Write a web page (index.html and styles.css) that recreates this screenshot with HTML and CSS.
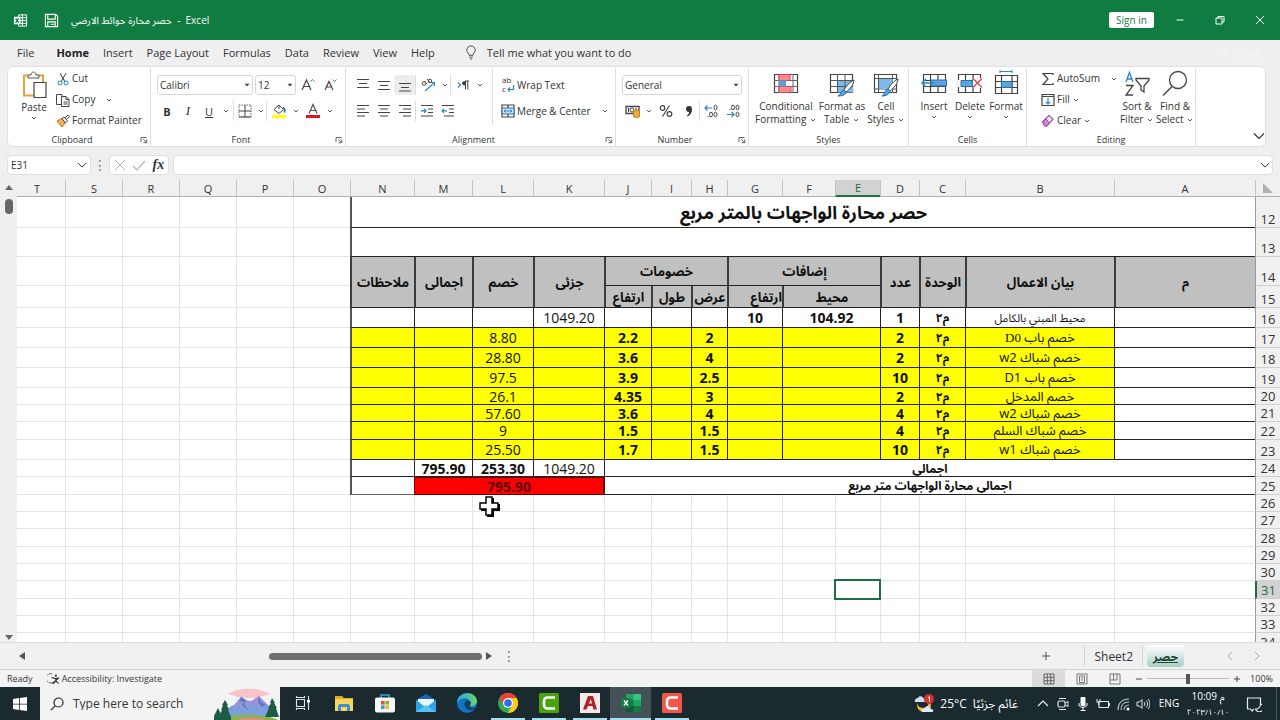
FILE: index.html
```html
<!DOCTYPE html>
<html lang="en">
<head>
<meta charset="utf-8">
<title>حصر محارة حوائط الارضي - Excel</title>
<link rel="stylesheet" href="styles.css">
</head>
<body>
<svg class="defs" aria-hidden="true">
  <symbol id="chev" viewBox="0 0 8 8"><path d="M2 3l2 2 2-2" fill="none" stroke="#555" stroke-width="1"/></symbol>
  <symbol id="chev-big" viewBox="0 0 12 12"><path d="M1 3.500l5 5 5-5" fill="none" stroke="#333" stroke-width="1.200"/></symbol>
  <symbol id="tri" viewBox="0 0 8 8"><path d="M1.500 2.800h5L4 5.600z" fill="#444"/></symbol>
  <symbol id="launch" viewBox="0 0 8 8"><path d="M1 6V1.500h5.500M3.200 3.200L6.500 6.500M6.700 3.500v3.200H3.500" fill="none" stroke="#555" stroke-width=".9"/></symbol>
</svg>

<header class="title">
  <svg class="t-icon" viewBox="0 0 16 16"><path d="M6 2h8.500v12H6zM10 2v12M6 5h8.500M6 8h8.500M6 11h8.500" fill="none" stroke="#fff"/><path d="M1 4h7v8H1z" fill="#fff"/><path d="M2.800 5.800l3.200 4.400M6 5.800l-3.200 4.400" stroke="#107c41" stroke-width="1.300"/></svg>
  <svg class="t-icon" viewBox="0 0 16 16"><path d="M1.500 1.500h11l2 2v11h-13zM4 1.500v5h8v-5M4 14.500V9.500h8v5M7 12h4" fill="none" stroke="#fff" stroke-width="1.200"/></svg>
  <span class="doc"><bdi>حصر محارة حوائط الارضي</bdi>&nbsp; - &nbsp;Excel</span>
  <button class="signin">Sign in</button>
  <button class="win" aria-label="Minimize"><svg viewBox="0 0 12 12"><path d="M2.500 6h7" stroke="#fff"/></svg></button>
  <button class="win" aria-label="Restore"><svg viewBox="0 0 12 12"><path d="M2 4h6v6H2zM4 4V2.500h6V8H8" fill="none" stroke="#fff"/></svg></button>
  <button class="win" aria-label="Close"><svg viewBox="0 0 12 12"><path d="M2 2l8 8M10 2l-8 8" stroke="#fff"/></svg></button>
</header>

<nav class="tabs">
  <button>File</button><button class="on">Home</button><button>Insert</button><button>Page Layout</button><button>Formulas</button><button>Data</button><button>Review</button><button>View</button><button>Help</button>
  <button class="tell"><svg viewBox="0 0 12 16"><path d="M4 11C4 9 1.500 8 1.500 5.500a4.500 4.500 0 0 1 9 0C10.500 8 8 9 8 11zM4 13h4M5 15h2" fill="none" stroke="#444"/></svg>Tell me what you want to do</button>
  <button class="share">⇪ Share</button>
</nav>

<section class="ribbon">
  <div class="group g-clip">
    <div class="body">
      <button class="big paste"><svg viewBox="0 0 26 28"><path d="M3 4.500h19v20H3z" fill="#fff" stroke="#e9a13b" stroke-width="2"/><path d="M7 7V4h3c0-4 5-4 5 0h3v3z" fill="#fff" stroke="#555"/><path d="M13 11.500h12v15H13z" fill="#fff" stroke="#444" stroke-width="1.200"/></svg><span>Paste</span><svg class="c"><use href="#chev"/></svg></button>
      <div class="stack">
        <button><svg class="i" viewBox="0 0 14 14"><path d="M4 1l5 9M10 1L5 10" fill="none" stroke="#444"/><circle cx="4" cy="11" r="2" fill="none" stroke="#2a86c8"/><circle cx="10" cy="11" r="2" fill="none" stroke="#2a86c8"/></svg>Cut</button>
        <button><svg class="i" viewBox="0 0 14 14"><path d="M5 11.500H.500V1.500H6v2M5.500 3.500H10l3 3v7H5.500zM10 3.500v3h3M7.500 9h4M7.500 11h4" fill="none" stroke="#444"/></svg>Copy<svg class="c far"><use href="#chev"/></svg></button>
        <button><svg class="i" viewBox="0 0 14 14"><path d="M1 7l5-2.500 3.500 4.500L6 13z" fill="#f0b15a" stroke="#c66b1c"/><path d="M6 4.500L8 3l3.500 4-2 2zM9 4l3-3 1.500 1.500-3 3.200" fill="#fff" stroke="#444"/></svg>Format Painter</button>
      </div>
    </div>
    <footer class="has-l"><span>Clipboard</span><svg class="l"><use href="#launch"/></svg></footer>
  </div>

  <div class="group g-font">
    <div class="body rows">
      <div class="row r1">
        <span class="combo fname"><select aria-label="Font"><option>Calibri</option></select><svg><use href="#tri"/></svg></span>
        <span class="combo fsize"><select aria-label="Font size"><option>12</option></select><svg><use href="#tri"/></svg></span>
        <button class="w22" aria-label="Increase font size"><svg class="s16" viewBox="0 0 16 16"><path d="M2 13L6.500 3 11 13M3.500 9.500h6" fill="none" stroke="#444" stroke-width="1.200"/><path d="M10.500 4.500L12.500 2.500l2 2" fill="none" stroke="#2a86c8"/></svg></button>
        <button class="w22" aria-label="Decrease font size"><svg class="s16" viewBox="0 0 16 16"><path d="M3 13L7 4.500 11 13M4.500 10h5" fill="none" stroke="#444" stroke-width="1.200"/><path d="M10.500 2.500l2 2 2-2" fill="none" stroke="#2a86c8"/></svg></button>
      </div>
      <div class="row">
        <button class="w20 bold">B</button><button class="w22 ital">I</button><button class="w20 und">U</button><button class="w14" aria-label="Underline styles"><svg class="c"><use href="#chev"/></svg></button><i class="sep"></i>
        <button class="w22" aria-label="Borders"><svg class="s14" viewBox="0 0 14 14"><path d="M1 1h12v12H1z" fill="none" stroke="#666" stroke-dasharray="1.500 1"/><path d="M1 7h12M7 1v12M1 13h12" stroke="#444"/></svg></button><button class="w10" aria-label="Border styles"><svg class="c"><use href="#chev"/></svg></button><i class="sep"></i>
        <button class="w24" aria-label="Fill color"><svg class="s16" viewBox="0 0 16 16"><path d="M3 6.500L8 2l4.500 4.500L8 10.500zM8 2V6" fill="#fff" stroke="#444"/><path d="M12 4.500c2 1 2 3 1.500 5" fill="none" stroke="#2268b0" stroke-width="1.600"/><path d="M1 12h14v3H1z" fill="#ff0"/></svg></button><button class="w10" aria-label="Fill colors"><svg class="c"><use href="#chev"/></svg></button>
        <button class="w24" aria-label="Font color"><svg class="s16" viewBox="0 0 16 16"><path d="M4 10.500L8 1.500l4 9M5.500 7.500h5" fill="none" stroke="#555" stroke-width="1.200"/><path d="M1 12h14v3H1z" fill="#e0141c"/></svg></button><button class="w10" aria-label="Font colors"><svg class="c"><use href="#chev"/></svg></button>
      </div>
    </div>
    <footer class="has-l"><span>Font</span><svg class="l"><use href="#launch"/></svg></footer>
  </div>

  <div class="group g-align">
    <div class="body">
      <div class="rows al">
        <div class="row">
          <button class="w21" aria-label="Top align"><svg class="s14" viewBox="0 0 14 14"><path d="M1 1.500h12M3 5.500h8M1 9.500h12" stroke="#444"/></svg></button><button class="w21" aria-label="Middle align"><svg class="s14" viewBox="0 0 14 14"><path d="M1 3.500h12M3 7.500h8M1 11.500h12" stroke="#444"/></svg></button><button class="w21 on" aria-label="Bottom align"><svg class="s14" viewBox="0 0 14 14"><path d="M1 5.500h12M3 9.500h8M1 13h12" stroke="#444"/></svg></button><i class="sep"></i>
          <button class="w24" aria-label="Orientation"><svg class="s14" viewBox="0 0 14 14"><circle cx="3" cy="5.500" r="1.800" fill="none" stroke="#444"/><path d="M3.500 3l2.500 3M6 1l3.500 4" stroke="#444"/><circle cx="9" cy="3" r="1.700" fill="none" stroke="#444"/><path d="M4 13l9-8M9.500 4.500H13.500V8" fill="none" stroke="#2a86c8" stroke-width="1.200"/></svg></button><button class="w10" aria-label="Orientation options"><svg class="c"><use href="#chev"/></svg></button><i class="sep"></i>
          <button class="w24" aria-label="Text direction"><svg class="s14" viewBox="0 0 14 14"><path d="M2 4.500L4.500 7 2 9.500" fill="none" stroke="#2a86c8" stroke-width="1.200"/><path d="M9 3c-4 0-4 4.500 0 4.500z" fill="#444"/><path d="M9 3h4M9.500 3v8.500M11.800 3v8.500" stroke="#444"/></svg></button><button class="w10" aria-label="Direction options"><svg class="c"><use href="#chev"/></svg></button>
        </div>
        <div class="row">
          <button class="w21" aria-label="Align left"><svg class="s14" viewBox="0 0 14 14"><path d="M1 1.500h12M1 5h8M1 8.500h12M1 12h8" stroke="#444"/></svg></button><button class="w21" aria-label="Center"><svg class="s14" viewBox="0 0 14 14"><path d="M1 1.500h12M3 5h8M1 8.500h12M3 12h8" stroke="#444"/></svg></button><button class="w21" aria-label="Align right"><svg class="s14" viewBox="0 0 14 14"><path d="M1 1.500h12M5 5h8M1 8.500h12M5 12h8" stroke="#444"/></svg></button><i class="sep"></i>
          <button class="w21" aria-label="Increase indent"><svg class="s14" viewBox="0 0 14 14"><path d="M1 1.500h12M8 5h5M8 8.500h5M1 12h12" stroke="#444"/><path d="M1 6.800h5M4 4.800l2 2-2 2" fill="none" stroke="#2a86c8" stroke-width="1.200"/></svg></button><button class="w21" aria-label="Decrease indent"><svg class="s14" viewBox="0 0 14 14"><path d="M1 1.500h12M8 5h5M8 8.500h5M3 12h10" stroke="#444"/><path d="M1 6.800h5M3 4.800l-2 2 2 2" fill="none" stroke="#2a86c8" stroke-width="1.200"/></svg></button>
        </div>
      </div>
      <div class="rows wrap">
        <button><svg class="s14 wt" viewBox="0 0 14 18"><text x="1" y="7" font-size="8" fill="#333">ab</text><text x="1" y="16" font-size="8" fill="#333">c</text><path d="M12.500 9v4.500H7M9 11.500l-2 2 2 2" fill="none" stroke="#2a86c8" stroke-width="1.200"/></svg>Wrap Text</button>
        <button><svg class="s14" viewBox="0 0 14 14"><path d="M1 1h12v12H1zM7 1v3M7 10v3" fill="none" stroke="#444" stroke-width="1.200"/><path d="M1 4h12v6H1z" fill="#cfe6f7" stroke="#2a6ea8"/><path d="M3 7h8M4.500 5.500L3 7l1.500 1.500M9.500 5.500L11 7 9.500 8.500" fill="none" stroke="#2a86c8"/></svg>Merge &amp; Center<svg class="c far"><use href="#chev"/></svg></button>
      </div>
    </div>
    <footer class="has-l"><span>Alignment</span><svg class="l"><use href="#launch"/></svg></footer>
  </div>

  <div class="group g-num">
    <div class="body rows">
      <div class="row"><span class="combo wide"><select aria-label="Number format"><option>General</option></select><svg><use href="#tri"/></svg></span></div>
      <div class="row">
        <button class="w22" aria-label="Accounting format"><svg class="s16" viewBox="0 0 16 16"><path d="M1 3.500h13v7H1z" fill="#fff" stroke="#444" stroke-width="1.300"/><circle cx="7" cy="7" r="2" fill="none" stroke="#444"/><path d="M3.500 5v4M11 5v2" stroke="#444"/><path d="M8.500 8.500c0-2 6-2 6 0v5c0 1.500-6 1.500-6 0z" fill="#f2a93c" stroke="#c97a1a"/></svg></button><button class="w10" aria-label="Currencies"><svg class="c"><use href="#chev"/></svg></button>
        <button class="w24 pct" aria-label="Percent"><svg class="s14" viewBox="0 0 14 14"><g fill="none" stroke="#444" stroke-width="1.200"><circle cx="3.500" cy="4" r="2.300"/><circle cx="10.500" cy="10" r="2.300"/><path d="M10.500 1.500l-7 11"/></g></svg></button>
        <button class="w21" aria-label="Comma style"><svg class="s14" viewBox="0 0 14 14"><path d="M4 5a3 3 0 1 1 6 0c0 4-2 6.500-4.500 7.500L5 11.500c1.500-1 2-2 2.200-3.500C5 8 4 7 4 5z" fill="#333"/></svg></button><i class="sep"></i>
        <button class="w22" aria-label="Increase decimal"><svg class="s14" viewBox="0 0 14 14"><g fill="none" stroke="#444"><ellipse cx="11.500" cy="3.500" rx="1.500" ry="2.300"/><ellipse cx="7" cy="10.500" rx="1.500" ry="2.300"/><ellipse cx="11.500" cy="10.500" rx="1.500" ry="2.300"/></g><path d="M1 4h7M3.500 1.500L1 4l2.500 2.500" fill="none" stroke="#2a86c8" stroke-width="1.200"/><path d="M3.500 12.500h1" stroke="#444"/></svg></button>
        <button class="w22" aria-label="Decrease decimal"><svg class="s14" viewBox="0 0 14 14"><g fill="none" stroke="#444"><ellipse cx="7" cy="3.500" rx="1.500" ry="2.300"/><ellipse cx="11.500" cy="3.500" rx="1.500" ry="2.300"/><ellipse cx="11.500" cy="10.500" rx="1.500" ry="2.300"/></g><path d="M1 10.500h7M5.500 8L8 10.500 5.500 13" fill="none" stroke="#2a86c8" stroke-width="1.200"/><path d="M3.500 5.500h1" stroke="#444"/></svg></button>
      </div>
    </div>
    <footer class="has-l"><span>Number</span><svg class="l"><use href="#launch"/></svg></footer>
  </div>

  <div class="group g-styles">
    <div class="body">
      <button class="big b62"><svg viewBox="0 0 26 28"><path d="M1.500 4.500h23v18h-23z" fill="#fff" stroke="#444" stroke-width="1.200"/><path d="M1 10.500h24M1 16.500h24M6 4v19M20 4v19" stroke="#666"/><path d="M6 4.500h11v6H6zM6 16.500h12v6H6z" fill="#f98a8e" stroke="#d8484e"/><path d="M6 10.500h7v6H6z" fill="#5a9fd8"/></svg><span>Conditional<br>Formatting <svg class="c"><use href="#chev"/></svg></span></button>
      <button class="big b50"><svg viewBox="0 0 26 28"><path d="M1.500 4.500h22v18h-22z" fill="#fff" stroke="#444" stroke-width="1.200"/><path d="M9 10.500h15v12H9z" fill="#7db9ea"/><path d="M1 10.500h23M1 16.500h23M8.500 4v19M16 4v19" stroke="#555"/><path d="M25 10c-4 2-8 6-10 10l2 2c4-3 8-8 8-12z" fill="#fff" stroke="#444"/><path d="M15 20l2 2c0 3-4 4-8 4 3-1 2-5 6-6z" fill="#5aa5e0" stroke="#226ba8"/></svg><span>Format as<br>Table <svg class="c"><use href="#chev"/></svg></span></button>
      <button class="big b38"><svg viewBox="0 0 26 28"><path d="M1.500 4.500h22v18h-22z" fill="#fff" stroke="#444" stroke-width="1.200"/><path d="M1 8.500h23M1 19h23M5.500 4v19M19.500 4v19" stroke="#555"/><path d="M6 9h13.500v10H6z" fill="#7db9ea"/><path d="M25 9c-4 2-8 6-10 10l2 2c4-3 8-8 8-12z" fill="#fff" stroke="#444"/><path d="M15 19l2 2c0 3-4 5-8 5 3-1 2-6 6-7z" fill="#5aa5e0" stroke="#226ba8"/></svg><span>Cell<br>Styles <svg class="c"><use href="#chev"/></svg></span></button>
    </div>
    <footer><span>Styles</span></footer>
  </div>

  <div class="group g-cells">
    <div class="body">
      <button class="big b36"><svg viewBox="0 0 26 28"><path d="M2.500 4.500h22v18h-22zM2 10.500h23M2 16.500h23M9.500 4v19M17 4v19" fill="#fff" stroke="#444" stroke-width="1.200"/><path d="M10 10h15.500v6H10z" fill="#5aa5e0" stroke="#2a6ea8"/><path d="M1 13h12M5 9l-4 4 4 4" fill="none" stroke="#2a86c8" stroke-width="1.500"/></svg><span>Insert</span><svg class="c"><use href="#chev"/></svg></button>
      <button class="big b36"><svg viewBox="0 0 26 28"><path d="M1.500 4.500h22v18h-22zM1 10.500h23M1 16.500h23M8.500 4v19M16 4v19" fill="#fff" stroke="#444" stroke-width="1.200"/><path d="M1 10h4v7H1z" fill="#fff"/><path d="M4 10.500h11v6H4z" fill="#5aa5e0" stroke="#2a6ea8"/><path d="M16 8h9v10h-9z" fill="#fff"/><path d="M16 8.500l9 9M25 8.500l-9 9" stroke="#e2474d" stroke-width="1.400"/></svg><span>Delete</span><svg class="c"><use href="#chev"/></svg></button>
      <button class="big b36"><svg viewBox="0 0 26 28"><path d="M2.500 5.500h22v18h-22zM2 11.500h23M2 17.500h23M8.500 5v19M19 5v19" fill="#fff" stroke="#444" stroke-width="1.200"/><path d="M8.500 11.500H19v6H8.500z" fill="#5aa5e0" stroke="#2a6ea8"/><path d="M7 1.500h12M7 0v3M19 0v3" stroke="#2a86c8"/></svg><span>Format</span><svg class="c"><use href="#chev"/></svg></button>
    </div>
    <footer><span>Cells</span></footer>
  </div>

  <div class="group g-edit">
    <div class="body">
      <div class="stack">
        <button><svg class="i" viewBox="0 0 14 14"><path d="M12 3V1.500H2l5 5.500-5 5.500h10V11" fill="none" stroke="#444" stroke-width="1.200"/></svg>AutoSum<svg class="c far"><use href="#chev"/></svg></button>
        <button><svg class="i" viewBox="0 0 14 14"><path d="M1 1.500h12v11H1zM1 3.500h12" fill="none" stroke="#444" stroke-width="1.200"/><path d="M7 5v6M4.800 8.800L7 11l2.200-2.200" fill="none" stroke="#2a86c8" stroke-width="1.200"/></svg>Fill<svg class="c"><use href="#chev"/></svg></button>
        <button><svg class="i" viewBox="0 0 14 14"><path d="M1.500 8L8 1.500 12 5l-6 7H4z" fill="#fff" stroke="#a045b0" stroke-width="1.200"/><path d="M1.500 8L5 5l3.500 4L6 12H4z" fill="#cf8ad8" stroke="#a045b0"/></svg>Clear<svg class="c"><use href="#chev"/></svg></button>
      </div>
      <button class="big b38 sort"><svg viewBox="0 0 26 28"><path d="M2 12L5.500 2.500 9 12M3.500 9h4.500" fill="none" stroke="#2a86c8" stroke-width="1.300"/><path d="M2 15.500h7L2 25h7" fill="none" stroke="#444" stroke-width="1.300"/><path d="M12 8.500h13v1.500l-5 6v6l-3-2v-4l-5-6z" fill="#fff" stroke="#444" stroke-width="1.300"/></svg><span>Sort &amp;<br>Filter <svg class="c"><use href="#chev"/></svg></span></button>
      <button class="big b38"><svg viewBox="0 0 26 28"><circle cx="16" cy="10" r="8.500" fill="#fff" stroke="#444" stroke-width="1.300"/><path d="M10 16.500L1 25.500" stroke="#444" stroke-width="1.500"/></svg><span>Find &amp;<br>Select <svg class="c"><use href="#chev"/></svg></span></button>
    </div>
    <footer><span>Editing</span></footer>
  </div>
  <button class="collapse" aria-label="Collapse ribbon"><svg viewBox="0 0 12 12"><use href="#chev-big"/></svg></button>
</section>

<section class="fbar">
  <label class="namebox"><input value="E31" aria-label="Name box"><svg viewBox="0 0 12 12"><use href="#chev-big"/></svg></label>
  <span class="dots">⋮</span>
  <div class="fx"><button aria-label="Cancel"><svg viewBox="0 0 14 14"><path d="M2 2l10 10M12 2L2 12" stroke="#b5b5b5"/></svg></button><button aria-label="Enter"><svg viewBox="0 0 14 14"><path d="M1 8l4 4 8-9" fill="none" stroke="#b5b5b5" stroke-width="1.200"/></svg></button><button class="fn">fx</button></div>
  <label class="formula"><input aria-label="Formula bar"><svg viewBox="0 0 12 12"><use href="#chev-big"/></svg></label>
</section>

<main class="sheet">
  <div class="vscroll"><svg viewBox="0 0 8 6"><path d="M0 5h8L4 0z" fill="#666"/></svg><i></i><svg class="dn" viewBox="0 0 8 6"><path d="M0 1h8L4 6z" fill="#666"/></svg></div>
  <div class="grid" dir="rtl">
  <table>
    <colgroup><col class="cr"><col class="ca"><col class="cb"><col class="cc"><col class="cd"><col class="ce"><col class="cf"><col class="cg"><col class="ch"><col class="ci"><col class="cj"><col class="ck"><col class="cl"><col class="cm"><col class="cn"><col span="6" class="co"></colgroup>
    <thead><tr><th class="corner"><svg viewBox="0 0 10 10"><path d="M0 0v10h10z" fill="#b0b0b0"/></svg></th><th>A<th>B<th>C<th>D<th class="cur">E<th>F<th>G<th>H<th>I<th>J<th>K<th>L<th>M<th>N<th>O<th>P<th>Q<th>R<th>S<th>T</tr></thead>
    <tbody>
    <tr class="h31 k"><th>12</th><td colspan="14" class="heading edge">حصر محارة الواجهات بالمتر مربع</td><td><td><td><td><td><td></tr>
    <tr class="h29 k"><th>13</th><td colspan="14" class="edge"></td><td><td><td><td><td><td></tr>
    <tr class="h29 k hd"><th>14</th><td rowspan="2">م</td><td rowspan="2">بيان الاعمال</td><td rowspan="2">الوحدة</td><td rowspan="2">عدد</td><td colspan="3">إضافات</td><td colspan="3">خصومات</td><td rowspan="2">جزئى</td><td rowspan="2">خصم</td><td rowspan="2">اجمالى</td><td rowspan="2" class="edge">ملاحظات</td><td><td><td><td><td><td></tr>
    <tr class="h22 k hd"><th>15</th><td colspan="2">محيط</td><td class="start">ارتفاع</td><td>عرض</td><td>طول</td><td>ارتفاع</td><td><td><td><td><td><td></tr>
    <tr class="h20 k d"><th>16</th><td></td><td class="small">محيط المبني بالكامل</td><td class="u">م٢</td><td>1</td><td colspan="2">104.92</td><td>10</td><td><td><td><td class="n">1049.20</td><td><td><td class="edge"></td><td><td><td><td><td><td></tr>
    <tr class="h20 k d y"><th>17</th><td></td><td class="item serif">خصم باب D0</td><td class="u">م٢</td><td>2</td><td colspan="2"></td><td></td><td>2</td><td></td><td>2.2</td><td></td><td class="n">8.80</td><td></td><td class="edge"></td><td><td><td><td><td><td></tr>
    <tr class="h20 k d y"><th>18</th><td></td><td class="item">خصم شباك w2</td><td class="u">م٢</td><td>2</td><td colspan="2"></td><td></td><td>4</td><td></td><td>3.6</td><td></td><td class="n">28.80</td><td></td><td class="edge"></td><td><td><td><td><td><td></tr>
    <tr class="h20 k d y"><th>19</th><td></td><td class="item">خصم باب D1</td><td class="u">م٢</td><td>10</td><td colspan="2"></td><td></td><td>2.5</td><td></td><td>3.9</td><td></td><td class="n">97.5</td><td></td><td class="edge"></td><td><td><td><td><td><td></tr>
    <tr class="h17 k d y"><th>20</th><td></td><td class="item">خصم المدخل</td><td class="u">م٢</td><td>2</td><td colspan="2"></td><td></td><td>3</td><td></td><td>4.35</td><td></td><td class="n">26.1</td><td></td><td class="edge"></td><td><td><td><td><td><td></tr>
    <tr class="h17 k d y"><th>21</th><td></td><td class="item">خصم شباك w2</td><td class="u">م٢</td><td>4</td><td colspan="2"></td><td></td><td>4</td><td></td><td>3.6</td><td></td><td class="n">57.60</td><td></td><td class="edge"></td><td><td><td><td><td><td></tr>
    <tr class="h18 k d y"><th>22</th><td></td><td class="item">خصم شباك السلم</td><td class="u">م٢</td><td>4</td><td colspan="2"></td><td></td><td>1.5</td><td></td><td>1.5</td><td></td><td class="n">9</td><td></td><td class="edge"></td><td><td><td><td><td><td></tr>
    <tr class="h20 k d y"><th>23</th><td></td><td class="item">خصم شباك w1</td><td class="u">م٢</td><td>10</td><td colspan="2"></td><td></td><td>1.5</td><td></td><td>1.7</td><td></td><td class="n">25.50</td><td></td><td class="edge"></td><td><td><td><td><td><td></tr>
    <tr class="h17 k d"><th>24</th><td colspan="10" class="total">اجمالى</td><td class="n">1049.20</td><td>253.30</td><td>795.90</td><td class="edge"></td><td><td><td><td><td><td></tr>
    <tr class="h18 k d"><th>25</th><td colspan="10" class="total">اجمالى محارة الواجهات متر مربع</td><td colspan="3" class="red">795.90</td><td class="edge box"></td><td><td><td><td><td><td></tr>
    <tr class="h17"><th>26</th><td><td><td><td><td><td><td><td><td><td><td><td><td><td><td><td><td><td><td><td></tr>
    <tr class="h17"><th>27</th><td><td><td><td><td><td><td><td><td><td><td><td><td><td><td><td><td><td><td><td></tr>
    <tr class="h18"><th>28</th><td><td><td><td><td><td><td><td><td><td><td><td><td><td><td><td><td><td><td><td></tr>
    <tr class="h17"><th>29</th><td><td><td><td><td><td><td><td><td><td><td><td><td><td><td><td><td><td><td><td></tr>
    <tr class="h17"><th>30</th><td><td><td><td><td><td><td><td><td><td><td><td><td><td><td><td><td><td><td><td></tr>
    <tr class="h18"><th class="cur">31</th><td><td><td><td><td class="sel"><i></i></td><td><td><td><td><td><td><td><td><td><td><td><td><td><td><td></tr>
    <tr class="h17"><th>32</th><td><td><td><td><td><td><td><td><td><td><td><td><td><td><td><td><td><td><td><td></tr>
    <tr class="h17"><th>33</th><td><td><td><td><td><td><td><td><td><td><td><td><td><td><td><td><td><td><td><td></tr>
    <tr class="h18"><th>34</th><td><td><td><td><td><td><td><td><td><td><td><td><td><td><td><td><td><td><td><td></tr>
    </tbody>
  </table>
  </div>
  <svg class="pointer" viewBox="0 0 24 24"><path d="M9 3h7v6h6v7h-6v6H9v-6H3V9h6z" fill="#000"/><path d="M8 2h6v6h6v6h-6v6H8v-6H2V8h6z" fill="#fff" stroke="#000" stroke-width="1.500"/></svg>
</main>

<section class="sheetbar">
  <svg class="arr" viewBox="0 0 6 8"><path d="M6 0v8L0 4z" fill="#555"/></svg>
  <div class="hscroll"><i></i></div>
  <svg class="arr" viewBox="0 0 6 8"><path d="M0 0v8l6-4z" fill="#555"/></svg>
  <span class="dots">⋮</span>
  <button class="add" aria-label="New sheet"><svg viewBox="0 0 10 10"><path d="M1 5h8M5 1v8" stroke="#555"/></svg></button>
  <button class="tab">Sheet2</button>
  <button class="tab cur">حصر</button>
  <div class="nav"><button aria-label="Previous sheet"><svg viewBox="0 0 6 10"><path d="M5 1L1 5l4 4" fill="none" stroke="#aaa"/></svg></button><button aria-label="Next sheet"><svg viewBox="0 0 6 10"><path d="M1 1l4 4-4 4" fill="none" stroke="#aaa"/></svg></button></div>
</section>

<section class="status">
  <span>Ready</span>
  <button class="acc"><svg viewBox="0 0 14 14"><path d="M5 2a5 5 0 1 0 1 9M4 6h3" fill="none" stroke="#555" stroke-dasharray="4 1"/><circle cx="9" cy="4" r="1.200" fill="#444"/><path d="M5.500 6.500l3 .5 4-.5M9 7v2.500l-2.500 3M9 9.500l3 3M5 12.500l7-6" fill="none" stroke="#333" stroke-width="1.200"/></svg>Accessibility: Investigate</button>
  <div class="views">
    <button class="on" aria-label="Normal view"><svg viewBox="0 0 12 12"><path d="M1 1h10v10H1zM1 4.300h10M1 7.700h10M4.300 1v10M7.700 1v10" fill="none" stroke="#666"/></svg></button>
    <button aria-label="Page layout view"><svg viewBox="0 0 12 12"><path d="M1 1h10v10H1zM3.500 3h5v6.500h-5zM5 5h2M5 7h2" fill="none" stroke="#777"/></svg></button>
    <button aria-label="Page break view"><svg viewBox="0 0 12 12"><path d="M1 1h10v10H1zM4.500 1v6H8V1M1 7h4" fill="none" stroke="#777"/></svg></button>
  </div>
  <button class="zb" aria-label="Zoom out"><svg viewBox="0 0 8 8"><path d="M1 4h6" stroke="#444"/></svg></button>
  <input type="range" aria-label="Zoom" min="0" max="100" value="50">
  <button class="zb" aria-label="Zoom in"><svg viewBox="0 0 8 8"><path d="M1 4h6M4 1v6" stroke="#444"/></svg></button>
  <span class="pc">100%</span>
</section>

<footer class="taskbar">
  <button class="start-btn" aria-label="Start"><svg viewBox="0 0 14 14"><path d="M0 2l6-.9v5.600H0zM6.800 1L14 0v6.700H6.800zM0 7.400h6V13l-6-.9zM6.800 7.400H14V14l-7.200-1z" fill="#fff"/></svg></button>
  <label class="search"><svg class="mag" viewBox="0 0 14 14"><circle cx="8.500" cy="5.500" r="4.500" fill="none" stroke="#222" stroke-width="1.200"/><path d="M5.200 8.800L.800 13.200" stroke="#222" stroke-width="1.200"/></svg><input placeholder="Type here to search" aria-label="Type here to search">
    <svg class="hills" viewBox="0 0 66 32"><defs><linearGradient id="mt" x1="0" y1="0" x2="0" y2="1"><stop offset="0" stop-color="#a78bd0"/><stop offset="1" stop-color="#6fa6e2"/></linearGradient></defs><path d="M14 6c10-7 32-7 42 0L42 10H28z" fill="#f8c3cb"/><path d="M10 27c2-5 6-9 10-10l7-8 5 3 5 1 8-5 8 8 9 8v4H10z" fill="url(#mt)"/><path d="M27 9l5 3-2 4 5 7-7-6 2-3-5-1zM45 8l2 6 5 3-4 2-4-5z" fill="#5c78c8"/><path d="M2 32c10-7 50-7 62 0z" fill="#8bb250"/><path d="M11 12l3 5h-1l2 5h-1l3 7v3H5v-3l3-7H7l2-5H8zM4 20l3 6v6H0v-4zM58 10l3 5h-1l3 5h-1l3 9H51l4-9h-1l3-5h-1z" fill="#1f5b44"/><path d="M22 32c8-3 20-3 30 0z" fill="#e38f7d"/></svg></label>
  <div class="apps">
  <button class="app" aria-label="Task view"><svg class="n16" viewBox="0 0 16 16"><path d="M1.500 4.500h8v7h-8zM1.500 1v1.500h8V1M1.500 15v-1.500h8V15M13.500 1v14" fill="none" stroke="#dfe7ea" stroke-width="1.100"/><path d="M12 5h3v2.500h-3z" fill="#fff"/></svg></button>
  <button class="app" aria-label="File Explorer"><svg viewBox="0 0 20 20"><path d="M1 3h7l2 2h9v13H1z" fill="#e8a823"/><path d="M1 6h18v12H1z" fill="#fbd65c"/><path d="M4 18v-5c0-1 1-2 2-2h8c1 0 2 1 2 2v5h-3v-4H7v4z" fill="#3b8ed0"/></svg></button>
  <button class="app" aria-label="Microsoft Store"><svg viewBox="0 0 20 20"><path d="M6 5V2h8v3" fill="none" stroke="#37a6dc" stroke-width="1.500"/><rect y="4.500" width="20" height="15" rx="2" fill="#f4f6f7"/><path d="M6 8h3.600v3.600H6z" fill="#e8502f"/><path d="M10.400 8H14v3.600h-3.600z" fill="#7db928"/><path d="M6 12.400h3.600V16H6z" fill="#2d9fdd"/><path d="M10.400 12.400H14V16h-3.600z" fill="#f7b916"/></svg></button>
  <button class="app" aria-label="Mail"><svg viewBox="0 0 20 20"><path d="M0 7l10-6 10 6v12H0z" fill="#1266b5"/><path d="M2 6h16v8H2z" fill="#eaf6fd"/><path d="M0 7l10 7.500L20 7v12H0z" fill="#2fa3ea"/><path d="M0 19l10-7 10 7z" fill="#55c2f5"/></svg></button>
  <button class="app" aria-label="Edge"><svg viewBox="0 0 20 20"><defs><linearGradient id="ed" x1="0" y1="0" x2="1" y2="0"><stop offset="0" stop-color="#2aa7e0"/><stop offset="1" stop-color="#63d968"/></linearGradient></defs><circle cx="10" cy="10" r="10" fill="#1272c4"/><path d="M0 10C0-2 19-3 20 8c0 4-4 6-7.500 5 1-1 1.500-2 1-4C12 4 3 4 0 10z" fill="url(#ed)"/><path d="M7.500 11c0-3 3-5 6-2 1 1-1 2.500-.5 4.500 1 2 4 2 6 .8C17 18 8 19 7.500 11z" fill="#12405e"/></svg></button>
  <button class="app run" aria-label="Chrome"><svg viewBox="0 0 20 20"><circle cx="10" cy="10" r="10" fill="#34a853"/><path d="M1.300 5A10 10 0 0 1 18.700 5H10l-4.300 7.500z" fill="#ea4335"/><path d="M18.700 5A10 10 0 0 1 9.500 20l4.800-7.500L10 5z" fill="#fbc916"/><circle cx="10" cy="10" r="5" fill="#fff"/><circle cx="10" cy="10" r="3.800" fill="#2f72e8"/></svg></button>
  <button class="app run" aria-label="Camtasia"><svg viewBox="0 0 20 20"><rect width="20" height="20" rx="1.500" fill="#48a30d"/><path d="M16 4.500H8.500a3.500 3.500 0 0 0-3.500 3.500v4a3.500 3.500 0 0 0 3.500 3.500H16" fill="none" stroke="#fff" stroke-width="2.600"/></svg></button>
  <button class="app run" aria-label="AutoCAD"><svg viewBox="0 0 20 20"><path d="M0 0h20v20H0z" fill="#f6eae9"/><path d="M3 16.500L8 3h5l4 13.500h-3.500l-1-3.500H8l-1.500 3.500zM9 10.500h3L10.800 6z" fill="#b0222b" fill-rule="evenodd"/></svg></button>
  <button class="app run act" aria-label="Excel"><svg viewBox="0 0 20 20"><path d="M5 1h15v18H5z" fill="#21a366"/><path d="M12.500 1H20v6h-7.500z" fill="#33c481"/><path d="M5 13h15v6H5zM5 7h7.500v6H5z" fill="#107c41"/><path d="M5 13h7.500v6H5z" fill="#185c37"/><rect y="5" width="10" height="10" rx="1" fill="#107c41"/><path d="M3 7.500l4 5M7 7.500l-4 5" stroke="#fff" stroke-width="1.500"/></svg></button>
  <button class="app run" aria-label="Camtasia Recorder"><svg viewBox="0 0 20 20"><rect width="20" height="20" rx="1.500" fill="#f2564b"/><path d="M16 4.500H8.500a3.500 3.500 0 0 0-3.500 3.500v4a3.500 3.500 0 0 0 3.500 3.500H16" fill="none" stroke="#fff" stroke-width="2.600"/></svg></button>
  </div>

  <div class="tray">
    <button class="weather"><svg viewBox="0 0 20 20"><circle cx="10" cy="11" r="7" fill="#f6b93b"/><circle cx="9" cy="8" r="6" fill="#1b2a2f"/><path d="M1 8c-1-3 2-4 3-4 1-3 5-2 6 1 2 0 2 3 0 3z" fill="#cfe0fb"/><path d="M8 18c-1-3 2-4 3-4 1-3 5-2 6 1 3 0 3 3 1 3z" fill="#dbe8fd"/><circle cx="15" cy="5" r="5" fill="#d8322c"/><path d="M14 4l1.500-1.200V7.500" fill="none" stroke="#fff"/></svg><span>25°C</span><bdi>غائم جزئيًا</bdi></button>
    <button aria-label="Hidden icons"><svg viewBox="0 0 14 14"><path d="M2 9l5-5 5 5" fill="none" stroke="#e6ecee" stroke-width="1.200"/></svg></button>
    <button aria-label="Meet now"><svg viewBox="0 0 14 14"><path d="M3 1.500h7M3 12.500h7" stroke="#dfe6e8"/><rect x="2" y="4" width="7" height="6" rx="1.500" fill="none" stroke="#dfe6e8" stroke-width="1.200"/><path d="M9 6l3-1.500v5L9 8" fill="none" stroke="#dfe6e8"/></svg></button>
    <button aria-label="Microphone"><svg viewBox="0 0 14 14"><rect x="4.500" y="0" width="5" height="9" rx="1" fill="#fff"/><path d="M3 6v2c0 3 8 3 8 0V6M7 10v3M4.500 13.500h5" fill="none" stroke="#fff"/></svg></button>
    <button aria-label="Battery"><svg viewBox="0 0 14 14"><path d="M3 4.500h9.500v6H3zM13.500 6v3M1 2v3h3V2M2.500 5v3" fill="none" stroke="#dfe6e8" stroke-width="1.100"/></svg></button>
    <button aria-label="Wi-Fi"><svg viewBox="0 0 14 14"><g fill="none" stroke="#b9c6ca" stroke-width="1.100"><path d="M2 13C2 6 6 2 13 2M5 13c0-5 3-8 8-8M8 13c0-3 2-5 5-5"/></g><circle cx="12" cy="12" r="1.500" fill="#fff"/></svg></button>
    <button aria-label="Volume"><svg viewBox="0 0 14 14"><path d="M1 5h2.500L6 2.500v9L3.500 9H1zM8 5c1 1 1 3 0 4M10 3.500c2 2 2 5 0 7M12 2c2.500 3 2.500 7 0 10" fill="none" stroke="#dfe6e8"/></svg></button>
    <button class="lang">ENG</button>
    <button class="clock"><span dir="ltr">10:09 <bdi>م</bdi></span><span class="date">٢٠٢٣/١٠/١٠</span></button>
    <button class="note" aria-label="Notifications"><svg viewBox="0 0 16 16"><path d="M8 13l-2 2-1.500-2H1.500V2h13v6" fill="none" stroke="#e6ecee" stroke-width="1.200"/><path d="M14.500 8a4 4 0 1 1-5 5c3 0 5-2 5-5z" fill="none" stroke="#e6ecee" stroke-width="1.100"/></svg></button>
  </div>
</footer>
</body>
</html>
```
FILE: styles.css
```css
* { box-sizing: border-box; }
body {
  margin: 0; height: 100vh; display: flex; flex-direction: column; overflow: hidden;
  background: #efefef; color: #333;
  font: 10px/13px "Open Sans", "Noto Sans Arabic", "DejaVu Sans", sans-serif;
}
button, input, select { font: inherit; color: inherit; border: 0; background: none; padding: 0; margin: 0; outline: 0; }
button { display: flex; align-items: center; justify-content: center; white-space: nowrap; }
svg { display: block; flex: none; }
.defs { position: absolute; width: 0; height: 0; }
.c { width: 8px; height: 8px; display: inline-block; vertical-align: middle; }

/* title bar */
.title { height: 40px; flex: none; display: flex; align-items: center; background: #107c41; color: #fff; padding-left: 13px; }
.t-icon { width: 15px; height: 15px; margin-right: 16px; }
.doc { flex: 1; margin-left: -4px; }
.signin { width: 45px; height: 16px; background: #fff; color: #107c41; border-radius: 2px; margin-right: 6px; }
.win { width: 40px; height: 40px; }
.win svg { width: 12px; height: 12px; }

/* ribbon tabs */
.tabs { height: 26px; flex: none; display: flex; align-items: center; gap: 14px; padding: 0 18px 2px 17px; font-size: 11px; }
.tabs .on { font-weight: 700; color: #222; margin-left: 8px; }
.tell { gap: 10px; margin-left: 16px; }
.tell svg { width: 12px; height: 15px; }
.share { margin-left: auto; color: #f8f8f8; }

/* ribbon */
.ribbon { height: 81px; flex: none; display: flex; background: #fff; border: 1px solid #e0e0e0; border-radius: 6px; margin: 0 14px 0 7px; }
.group { display: flex; flex-direction: column; border-right: 1px solid #dedede; margin: 1px 0 0; }
.body { flex: 1; display: flex; }
.group footer { height: 13px; display: flex; align-items: center; justify-content: center; position: relative; font-size: 9px; line-height: 12px; }
.group .has-l { padding-right: 14px; }
.l { width: 8px; height: 8px; position: absolute; right: 2px; bottom: 2px; }
.g-clip { width: 143px; } .g-font { width: 195px; } .g-align { width: 270px; } .g-num { width: 133px; }
.g-styles { width: 160px; } .g-cells { width: 118px; } .g-edit { width: 169px; }
.rows { display: flex; flex-direction: column; gap: 6px; padding-top: 7px; }
.row { display: flex; align-items: center; height: 20px; }
.sep { width: 1px; height: 20px; background: #dcdcdc; }
.stack { display: flex; flex-direction: column; }
.stack button { height: 21px; gap: 2px; justify-content: flex-start; }
.i, .s14 { width: 14px; height: 14px; }
.wrap .wt { height: 18px; overflow: visible; }
.s16 { width: 16px; height: 16px; }
.w10 { width: 10px; } .w14 { width: 14px; } .w20 { width: 20px; } .w21 { width: 21px; } .w22 { width: 22px; } .w24 { width: 24px; }
.row button { height: 20px; font-size: 11px; }
.row .on { background: #ececec; border-radius: 3px; }
.row .bold { font-weight: 700; } .row .ital { font: italic 13px "Liberation Serif", serif; } .und { text-decoration: underline; }
.big { flex-direction: column; justify-content: flex-start; line-height: 13px; padding-top: 2px; }
.big > svg:first-child { width: 26px; height: 28px; margin: 0 auto 2px; }
.big span { display: block; text-align: center; }
.b62 { width: 62px; } .b50 { width: 50px; } .b38 { width: 38px; } .b36 { width: 36px; }
.paste { width: 28px; margin: 1px 8px 0 12px; }
.far { margin-left: 8px; }
.g-font .body { padding-left: 6px; }
.combo { position: relative; height: 20px; border: 1px solid #d6d6d6; border-radius: 3px; }
.combo select { width: 100%; height: 18px; appearance: none; padding-left: 2px; }
.combo svg { position: absolute; right: 1px; top: 5px; width: 8px; height: 8px; pointer-events: none; }
.fname { width: 96px; margin-right: 2px; } .fsize { width: 41px; margin-right: 1px; }
.wide { width: 120px; }
.al { width: 147px; padding-left: 6px; border-right: 1px solid #dedede; margin-bottom: 8px; }
.wrap { padding-left: 8px; }
.wrap button { height: 20px; gap: 2px; justify-content: flex-start; }
.g-num .body { padding-left: 6px; }
.g-styles .body { padding-left: 6px; }
.g-cells .body { padding-left: 7px; }
.g-edit .body { padding-left: 14px; }
.g-edit .stack { width: 77px; }
.collapse { margin: auto 0 4px auto; width: 12px; }
.collapse svg { width: 12px; height: 12px; }

/* formula bar */
.fbar { height: 20px; flex: none; display: flex; margin: 8px 7px 5px; }
.namebox, .formula, .fx { display: flex; align-items: center; background: #fff; border: 1px solid #e0e0e0; border-radius: 4px; }
.namebox { width: 84px; padding: 0 3px; }
.namebox input { width: 66px; }
.namebox svg, .formula svg { width: 10px; height: 10px; }
.dots { width: 18px; text-align: center; color: #777; font-size: 14px; line-height: 20px; }
.fx { width: 60px; }
.fx button { width: 20px; }
.fx svg { width: 14px; height: 14px; }
.fx .fn { font: italic 700 14px/18px "Liberation Serif", serif; }
.formula { flex: 1; margin-left: 4px; padding: 0 2px; }
.formula input { flex: 1; }

/* worksheet */
.sheet { flex: 1; min-height: 0; display: flex; position: relative; }
.vscroll { width: 17px; display: flex; flex-direction: column; align-items: center; padding: 5px 0; }
.vscroll svg { width: 8px; height: 6px; }
.vscroll i { width: 8px; height: 15px; border-radius: 4px; background: #666; margin-top: 8px; }
.vscroll .dn { margin-top: auto; margin-bottom: -3px; }
.grid { flex: 1; min-width: 0; overflow: hidden; background: #fff; }
table { table-layout: fixed; width: 1271px; border-collapse: separate; border-spacing: 0; }
.cr { width: 25px; } .ca { width: 141px; } .cb { width: 149px; } .cc { width: 46px; } .cd { width: 39px; }
.ce { width: 45px; } .cf { width: 53px; } .cg { width: 55px; } .ch { width: 36px; } .ci { width: 40px; }
.cj { width: 47px; } .ck { width: 71px; } .cl { width: 61px; } .cm { width: 58px; } .cn { width: 64px; } .co { width: 57px; }
td, th { padding: 0; line-height: 16px; text-align: center; vertical-align: middle; white-space: nowrap; overflow: hidden; }
td { border-left: 1px solid #e4e4e4; border-bottom: 1px solid #e4e4e4; color: #111; }
th { font-weight: 400; font-size: 11px; background: #f0f0f0; color: #333; }
thead th { height: 17px; line-height: 15px; border-left: 1px solid #c4c4c4; border-bottom: 1px solid #b0b0b0; }
tbody th { font-size: 13px; vertical-align: bottom; border-left: 1px solid #999; border-bottom: 1px solid #d0d0d0; }
thead .cur { background: #d2d2d2; color: #1e6e42; border-bottom: 2px solid #1e6e42; }
tbody .cur { background: #d2d2d2; color: #1e6e42; border-left: 2px solid #1e6e42; }
.corner svg { width: 10px; height: 10px; margin: 0 auto; }
.h17 { height: 17px; } .h18 { height: 18px; } .h20 { height: 20px; }
.h22 { height: 22px; } .h29 { height: 29px; } .h31 { height: 31px; }
.k td { border-left-color: #222; border-bottom-color: #222; font-weight: 700; font-size: 14px; }
.k .edge { border-left: 2px solid #555; }
.k .edge ~ td { border-left-color: #e4e4e4; border-bottom-color: #e4e4e4; background: #fff; }
.hd td, .hd td.edge { background: #c0c0c0; border-left: 2px solid #3c3c3c; border-bottom-width: 1px; font-size: 13px; }
.hd .edge ~ td, .hd td:nth-last-child(-n+6) { background: #fff; border-left: 1px solid #e4e4e4; border-bottom: 1px solid #e4e4e4; }
.k .heading { font-size: 18px; line-height: 28px; }
.k .start { text-align: right; }
.d td { line-height: 15px; }
.k .n { font-weight: 400; }
.k .item { font-weight: 400; font-size: 13px; }
.k .small { font-weight: 400; font-size: 11px; }
.k .u, .k .total { font-size: 12px; }
.k .serif { font-family: "Liberation Serif", "Noto Sans Arabic", "DejaVu Sans", serif; }
.y td { background: #ff0; }
.y th + td { background: #fff; }
.k .red { background: #f00; color: #5c0000; border: 1px solid #7a0000; }
.k .box { border-bottom-color: #666; }
.sel { position: relative; overflow: visible; }
.sel i { position: absolute; inset: -2px -1px -2px -2px; border: 2px solid #1e6e42; }
.pointer { position: absolute; left: 478px; top: 315px; width: 24px; height: 24px; }

/* sheet tabs */
.sheetbar { height: 28px; flex: none; display: flex; align-items: center; padding-left: 19px; border-top: 1px solid #dcdcdc; border-bottom: 1px solid #d2d2d2; background: #f0f0f0; }
.arr { width: 6px; height: 8px; }
.hscroll { width: 461px; display: flex; justify-content: flex-end; padding-right: 4px; }
.hscroll i { width: 213px; height: 7px; border-radius: 4px; background: #6e6e6e; }
.sheetbar .dots { margin-left: 8px; }
.add { margin-left: auto; width: 20px; }
.add svg { width: 10px; height: 10px; }
.tab { height: 22px; font-size: 12px; padding: 0 9px; border-right: 1px solid #d4d4d4; border-left: 1px solid #d4d4d4; margin-left: 28px; }
.tab.cur { width: 37px; padding: 0; margin-left: 4px; border: 0; font-weight: 700; color: #1e4a34; text-decoration: underline; background: linear-gradient(#fff, #a9cfc8); border-radius: 0 0 4px 4px; }
.nav { display: flex; gap: 21px; margin: 0 20px 0 43px; }
.nav svg { width: 6px; height: 10px; }

/* status bar */
.status { height: 17px; flex: none; display: flex; align-items: center; padding: 0 7px; background: #f3f3f3; font-size: 9px; }
.acc { margin-left: 14px; gap: 1px; }
.acc svg { width: 14px; height: 13px; }
.views { display: flex; margin-left: auto; }
.views button { width: 33px; height: 17px; }
.views .on { background: #dcdcdc; }
.views svg { width: 12px; height: 12px; }
.zb { width: 16px; }
.zb svg { width: 8px; height: 8px; }
.status input { appearance: none; width: 82px; height: 12px; background: linear-gradient(#bbb, #bbb) center / 100% 1px no-repeat; }
.status input::-webkit-slider-thumb { appearance: none; width: 4px; height: 10px; background: #555; }
.pc { margin-left: 5px; }

/* taskbar */
.taskbar { height: 33px; flex: none; display: flex; background: #1b2a2f; color: #fff; }
.start-btn { width: 40px; }
.start-btn svg { width: 14px; height: 14px; }
.search { width: 240px; display: flex; align-items: center; background: #f3f3f3; color: #333; padding-left: 10px; }
.mag { width: 14px; height: 14px; }
.search input { width: 130px; flex: 1; margin-left: 9px; font-size: 12px; }
.search input::placeholder { color: #333; opacity: 1; }
.hills { width: 66px; height: 32px; }
.apps { display: flex; padding-left: 2px; }
.app { width: 41px; border-bottom: 2px solid transparent; }
.app svg { width: 20px; height: 20px; }
.app .n16 { width: 16px; height: 16px; }
.run { background: linear-gradient(#a6dff0, #a6dff0) bottom / 34px 2px no-repeat border-box; }
.act { background: linear-gradient(#a6dff0, #a6dff0) bottom / 100% 2px no-repeat border-box, #445257; }
.tray { margin-left: auto; display: flex; align-items: center; padding-right: 3px; }
.tray button { width: 20px; height: 33px; }
.tray svg { width: 14px; height: 14px; }
.tray .weather { width: auto; gap: 6px; margin-right: 15px; font-size: 12px; }
.tray .weather svg { width: 20px; height: 20px; }
.tray .lang { width: 32px; }
.tray .clock { width: 46px; flex-direction: column; line-height: 16px; }
.tray .clock .date { font-size: 8px; }
.tray .note { width: 46px; border-right: 1px solid #4a575b; }
.tray .note svg { width: 16px; height: 16px; }
```
